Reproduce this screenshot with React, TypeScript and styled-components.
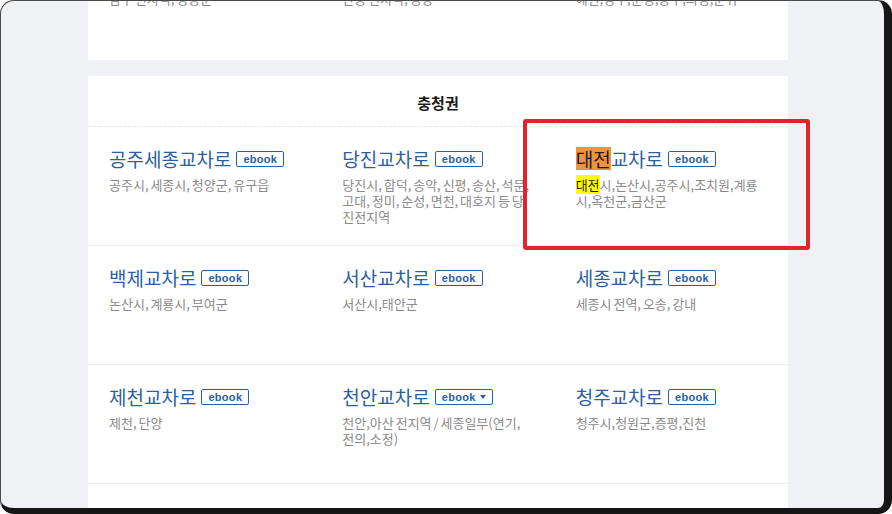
import React from "react";
import styled, { createGlobalStyle } from "styled-components";

const Global = createGlobalStyle`
  html, body { margin: 0; padding: 0; background: #ffffff; }
  body { font-family: "Noto Sans CJK KR", "Noto Sans", sans-serif; }
  * { box-sizing: border-box; }
`;

const Frame = styled.div`
  position: relative;
  width: 892px;
  height: 514px;
  border-radius: 14px;
  border-top: 1px solid #4a4a4a;
  border-left: 1px solid #4a4a4a;
  border-right: 8px solid #161616;
  border-bottom: 6px solid #161616;
  background: #f0f1f5;
  overflow: hidden;
`;

const Content = styled.div`
  margin-top: -60px;
  padding-left: 87px;
  display: flex;
  flex-direction: column;
  gap: 16px;
`;

const Card = styled.section<{ $padBottom?: number }>`
  width: 700px;
  background: #ffffff;
  padding-bottom: ${(p) => p.$padBottom ?? 0}px;
`;

const CardHeader = styled.h2`
  margin: 0;
  height: 51px;
  display: flex;
  align-items: center;
  justify-content: center;
  padding-top: 2px;
  font-size: 15px;
  font-weight: 700;
  color: #1a1a1a;
  border-bottom: 1px dashed #e6e6e6;
`;

const Row = styled.div<{ $last?: boolean }>`
  display: grid;
  grid-template-columns: repeat(3, 1fr);
  height: 119px;
  border-bottom: ${(p) => (p.$last ? "none" : "1px solid #efefef")};
`;

const Item = styled.div`
  padding: 20px 21px 0 21px;
  min-width: 0;
`;

const TitleLine = styled.div`
  display: flex;
  align-items: center;
  gap: 5px;
  height: 24px;
`;

const Title = styled.a`
  font-size: 19px;
  line-height: 24px;
  color: #2b5f9f;
  text-decoration: none;
  white-space: nowrap;
`;

const TitleMark = styled.span`
  display: inline-block;
  line-height: 23px;
  background: #f3923a;
  color: #1a1a1a;
`;

const Badge = styled.span`
  display: inline-flex;
  align-items: center;
  height: 16px;
  padding: 0 6px;
  border: 1px solid #2b5f9f;
  border-radius: 2px;
  font-family: "Liberation Sans", Arial, sans-serif;
  font-weight: 700;
  font-size: 11px;
  letter-spacing: 0.3px;
  color: #2b5f9f;
  background: #ffffff;
`;

const Caret = styled.span`
  display: inline-block;
  margin-left: 4px;
  width: 0;
  height: 0;
  border-left: 3px solid transparent;
  border-right: 3px solid transparent;
  border-top: 4px solid #2b5f9f;
`;

const Desc = styled.p`
  margin: 6px 0 0;
  font-size: 13px;
  line-height: 16px;
  word-spacing: -1px;
  color: #8a8a8a;
`;

const DescMark = styled.span`
  background: #ffff00;
  color: #1a1a1a;
`;

const Annotation = styled.div`
  position: absolute;
  left: 522px;
  top: 118px;
  width: 287px;
  height: 131px;
  border: 4.5px solid #e2232b;
  border-radius: 3px;
  pointer-events: none;
`;

type Entry = {
  title: React.ReactNode;
  desc: React.ReactNode;
  dropdown?: boolean;
};

const topRow: Entry[] = [
  { title: "포항교차로", desc: "남구 전지역, 청송군" },
  { title: "안동교차로", desc: "안동 전지역, 영양" },
  { title: "경북교차로", desc: "예천,영주,문경,상주,의성,군위" },
];

const rows: Entry[][] = [
  [
    { title: "공주세종교차로", desc: "공주시, 세종시, 청양군, 유구읍" },
    {
      title: "당진교차로",
      desc: "당진시, 합덕, 송악, 신평, 송산, 석문, 고대, 정미, 순성, 면천, 대호지 등 당진전지역",
    },
    {
      title: (
        <>
          <TitleMark>대전</TitleMark>교차로
        </>
      ),
      desc: (
        <>
          <DescMark>대전</DescMark>시,논산시,공주시,조치원,계룡시,옥천군,금산군
        </>
      ),
    },
  ],
  [
    { title: "백제교차로", desc: "논산시, 계룡시, 부여군" },
    { title: "서산교차로", desc: "서산시,태안군" },
    { title: "세종교차로", desc: "세종시 전역, 오송, 강내" },
  ],
  [
    { title: "제천교차로", desc: "제천, 단양" },
    {
      title: "천안교차로",
      desc: "천안,아산 전지역 / 세종일부(연기, 전의,소정)",
      dropdown: true,
    },
    { title: "청주교차로", desc: "청주시,청원군,증평,진천" },
  ],
];

function Cell({ entry }: { entry: Entry }) {
  return (
    <Item>
      <TitleLine>
        <Title href="#">{entry.title}</Title>
        <Badge>
          ebook
          {entry.dropdown && <Caret />}
        </Badge>
      </TitleLine>
      <Desc>{entry.desc}</Desc>
    </Item>
  );
}

export default function App() {
  return (
    <>
      <Global />
      <Frame>
        <Content>
          <Card>
            <Row $last>
              {topRow.map((e, i) => (
                <Cell key={i} entry={e} />
              ))}
            </Row>
          </Card>
          <Card $padBottom={40}>
            <CardHeader>충청권</CardHeader>
            {rows.map((r, ri) => (
              <Row key={ri}>
                {r.map((e, i) => (
                  <Cell key={i} entry={e} />
                ))}
              </Row>
            ))}
          </Card>
        </Content>
        <Annotation />
      </Frame>
    </>
  );
}
